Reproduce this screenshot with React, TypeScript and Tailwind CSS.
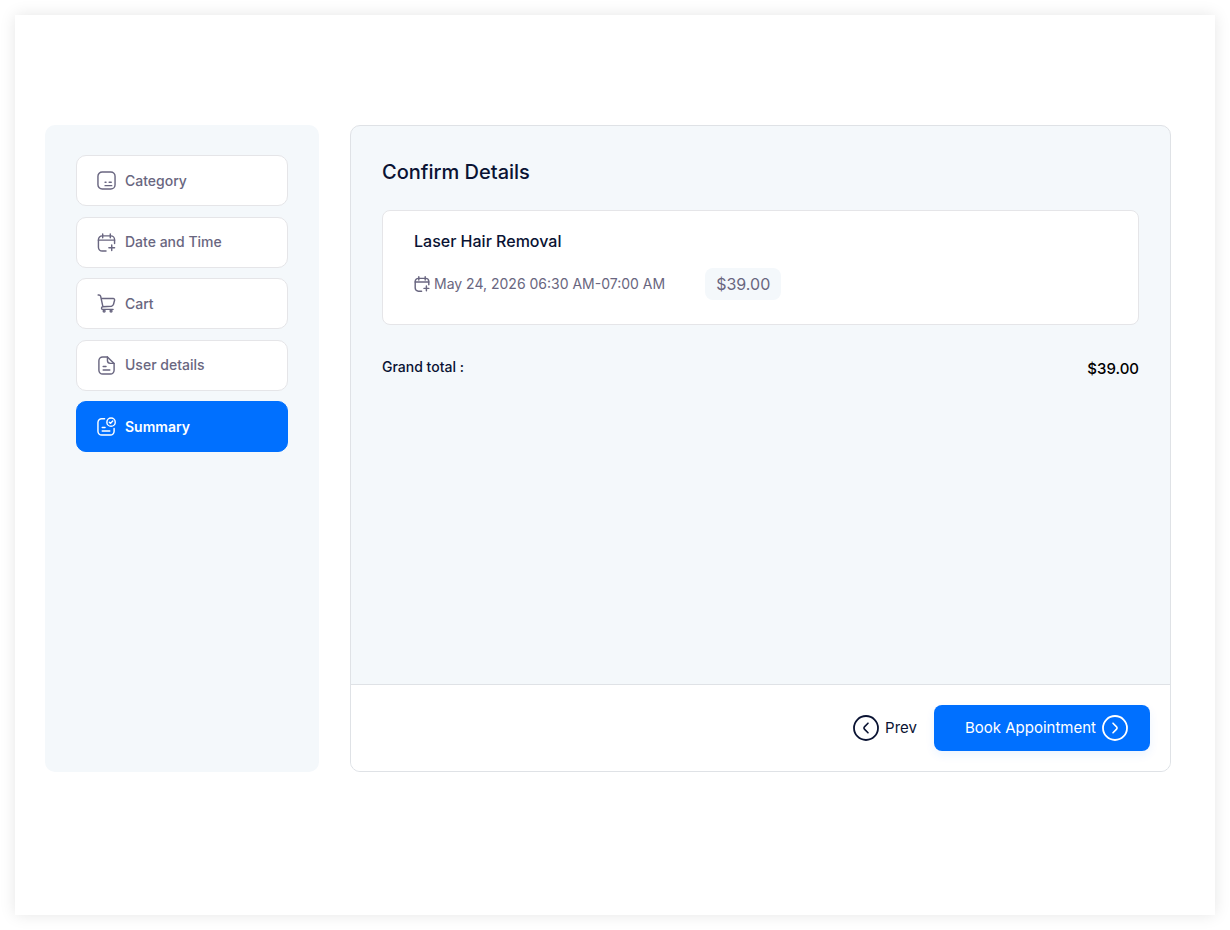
import type { ReactNode } from 'react';

interface IconProps {
  className?: string;
  strokeWidth?: number;
}

interface Step {
  label: string;
  icon: (props: IconProps) => ReactNode;
}

function Icon({ className, strokeWidth = 1.5, children }: IconProps & { children: ReactNode }) {
  return (
    <svg
      viewBox="0 0 20 20"
      fill="none"
      stroke="currentColor"
      strokeWidth={strokeWidth}
      strokeLinecap="round"
      strokeLinejoin="round"
      className={className}
      aria-hidden="true"
    >
      {children}
    </svg>
  );
}

function CategoryIcon(props: IconProps) {
  return (
    <Icon {...props}>
      <rect x="1" y="1" width="18" height="18" rx="4.5" />
      <path d="M8.5 11.8h1M12.8 11.8h2.2M8.5 15.4h7" />
    </Icon>
  );
}

function CalendarIcon(props: IconProps) {
  return (
    <Icon {...props}>
      <path d="M9.5 19H5.5a4 4 0 0 1-4-4V7a4 4 0 0 1 4-4h9a4 4 0 0 1 4 4v4" />
      <path d="M1.5 7.5h17M6 1v4M14 1v4M15.5 12.5v6M12.5 15.5h6" />
    </Icon>
  );
}

function CartIcon(props: IconProps) {
  return (
    <Icon {...props}>
      <path d="M1.2 1h.9c.8 0 1.5.5 1.7 1.3l2.4 11M4.4 4.8h12.7c1 0 1.7.9 1.4 1.8l-1.2 4.4a2.5 2.5 0 0 1-2.1 1.9L6 13.4a1.4 1.4 0 0 0 .3 2.8h10.6" />
      <circle cx="7.5" cy="18" r="1" />
      <circle cx="14.8" cy="18" r="1" />
    </Icon>
  );
}

function FileIcon(props: IconProps) {
  return (
    <Icon {...props}>
      <path d="M11 1H6a4 4 0 0 0-4 4v10a4 4 0 0 0 4 4h8a4 4 0 0 0 4-4V7.8z" />
      <path d="M11 1v3.8a3 3 0 0 0 3 3h4M6.5 11h3M6.5 14.7h7" />
    </Icon>
  );
}

function SummaryIcon(props: IconProps) {
  return (
    <Icon {...props}>
      <path d="M8 1.8H5a4 4 0 0 0-4 4V15a4 4 0 0 0 4 4h9a4 4 0 0 0 4-4v-3" />
      <circle cx="14.8" cy="5.4" r="4.4" />
      <path d="M13 5.5l1.3 1.2 2.3-2.4M5.5 11h3M5.5 14.7h8" />
    </Icon>
  );
}

function ArrowCircle({ direction }: { direction: 'left' | 'right' }) {
  return (
    <svg
      viewBox="0 0 26 26"
      fill="none"
      stroke="currentColor"
      strokeLinecap="round"
      strokeLinejoin="round"
      className="size-[26px] shrink-0"
      aria-hidden="true"
    >
      <circle cx="13" cy="13" r="12" strokeWidth="1.8" />
      <path
        d={
          direction === 'left'
            ? 'M15 8.2l-3.6 3.7a1.6 1.6 0 0 0 0 2.2L15 17.8'
            : 'M11 8.2l3.6 3.7a1.6 1.6 0 0 1 0 2.2L11 17.8'
        }
        strokeWidth="1.6"
      />
    </svg>
  );
}

const steps: Step[] = [
  { label: 'Category', icon: CategoryIcon },
  { label: 'Date and Time', icon: CalendarIcon },
  { label: 'Cart', icon: CartIcon },
  { label: 'User details', icon: FileIcon },
  { label: 'Summary', icon: SummaryIcon },
];

function StepList({ active }: { active: string }) {
  return (
    <nav className="w-[274px] shrink-0 rounded-[10px] bg-[#f4f8fb] px-[31px] py-[30px]">
      <ul className="flex h-[297px] flex-col justify-between">
        {steps.map(({ label, icon: StepIcon }) => (
          <li key={label}>
            <button
              type="button"
              className={`flex h-[51px] w-full items-center gap-[9px] rounded-[10px] border px-5 text-sm ${
                label === active
                  ? 'border-[#0070ff] bg-[#0070ff] font-semibold text-white'
                  : 'border-[#e5e5e8] bg-white font-medium text-[#696680]'
              }`}
            >
              <StepIcon className="size-[19px] shrink-0" />
              {label}
            </button>
          </li>
        ))}
      </ul>
    </nav>
  );
}

export default function App() {
  return (
    <div className="m-[15px] min-h-[900px] bg-white pt-[110px] pr-11 pb-8 pl-[30px] font-['Inter',sans-serif] text-[#0a1333] shadow-[0_0_15px_rgba(0,0,0,0.1)]">
      <div className="flex gap-[31px]">
        <StepList active="Summary" />

        <main className="flex min-h-[647px] min-w-0 flex-1 flex-col overflow-hidden rounded-[10px] border border-[#dfe2e6] bg-[#f4f8fb]">
          <div className="flex-1 px-[31px] pt-8">
            <h1 className="text-xl leading-7 font-medium">Confirm Details</h1>

            <section className="mt-6 rounded-lg border border-[#e5e5e8] bg-white px-[31px] pt-[18px] pb-6">
              <h2 className="text-base leading-6 font-medium">Laser Hair Removal</h2>
              <div className="mt-[15px] flex items-center gap-10">
                <p className="flex items-center gap-1 text-sm text-[#696680]">
                  <CalendarIcon className="size-4 shrink-0" strokeWidth={1.8} />
                  May 24, 2026 06:30 AM-07:00 AM
                </p>
                <span className="rounded-lg bg-[#f4f8fb] px-[11px] py-1 text-base leading-6 text-[#696680]">
                  $39.00
                </span>
              </div>
            </section>

            <div className="mt-8 flex items-start justify-between">
              <span className="text-sm leading-5 font-medium">Grand total :</span>
              <span className="text-[15px] leading-6 font-medium text-black">$39.00</span>
            </div>
          </div>

          <footer className="flex items-center justify-end gap-[17px] border-t border-[#dfe2e6] bg-white px-5 py-5">
            <button type="button" className="flex items-center gap-[6px] text-[15px]">
              <ArrowCircle direction="left" />
              Prev
            </button>
            <button
              type="button"
              className="flex h-[46px] items-center gap-[6px] rounded-lg bg-[#0070ff] pr-[22px] pl-[31px] text-[15px] text-white shadow-[0_4px_10px_rgba(0,112,255,0.08)]"
            >
              Book Appointment
              <ArrowCircle direction="right" />
            </button>
          </footer>
        </main>
      </div>
    </div>
  );
}
